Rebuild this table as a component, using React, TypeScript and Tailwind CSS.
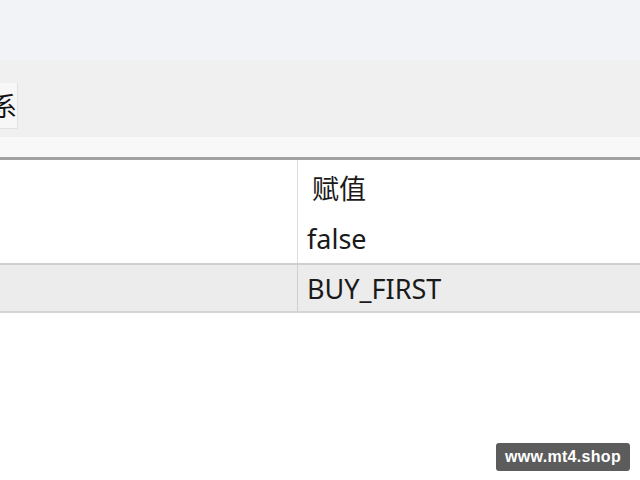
import React from 'react';

const font = { fontFamily: '"Noto Sans", "Noto Sans CJK SC", sans-serif' };

const App: React.FC = () => {
  return (
    <div className="w-[640px] h-[480px] bg-white relative overflow-hidden" style={font}>
      {/* Top window area */}
      <div className="h-[60px] bg-[#f2f3f6]"></div>

      {/* Tab strip */}
      <div className="h-[77px] bg-[#f0f0f0] pt-[23px]">
        <div className="w-[18px] h-[46px] bg-[#f7f7f7] border-r border-b border-[#e2e2e2] overflow-hidden flex items-center justify-end">
          <span className="text-[26px] leading-none text-[#111] shrink-0">系</span>
        </div>
      </div>

      {/* Light strip */}
      <div className="h-[20px] bg-[#f8f8f8]"></div>

      {/* Table */}
      <div className="border-t-[3px] border-[#a2a2a2]">
        <div className="flex h-[56px] bg-white">
          <div className="w-[298px] border-r border-[#dcdcdc]"></div>
          <div className="flex-1 flex items-center pl-[14px] pt-[2px] text-[27px] text-[#1a1a1a]">赋值</div>
        </div>
        <div className="flex h-[49px] bg-white border-b-2 border-[#cfcfcf]">
          <div className="w-[298px] border-r border-[#dcdcdc]"></div>
          <div className="flex-1 flex items-center pl-[9px] text-[27px] text-[#1a1a1a]">false</div>
        </div>
        <div className="flex h-[48px] bg-[#ececec] border-b-2 border-[#d4d4d4]">
          <div className="w-[298px] border-r border-[#d0d0d0]"></div>
          <div className="flex-1 flex items-center pl-[9px] pt-[2px] text-[27px] text-[#1a1a1a]">BUY_FIRST</div>
        </div>
      </div>

      {/* Watermark */}
      <div
        className="absolute left-[496px] top-[443px] w-[134px] h-[28px] rounded-[3px] bg-[#5c5c5c] flex items-center justify-center text-white text-[16px] font-bold tracking-[0.3px]"
        style={{ fontFamily: '"Liberation Sans", Arial, sans-serif' }}
      >
        www.mt4.shop
      </div>
    </div>
  );
};

export default App;
